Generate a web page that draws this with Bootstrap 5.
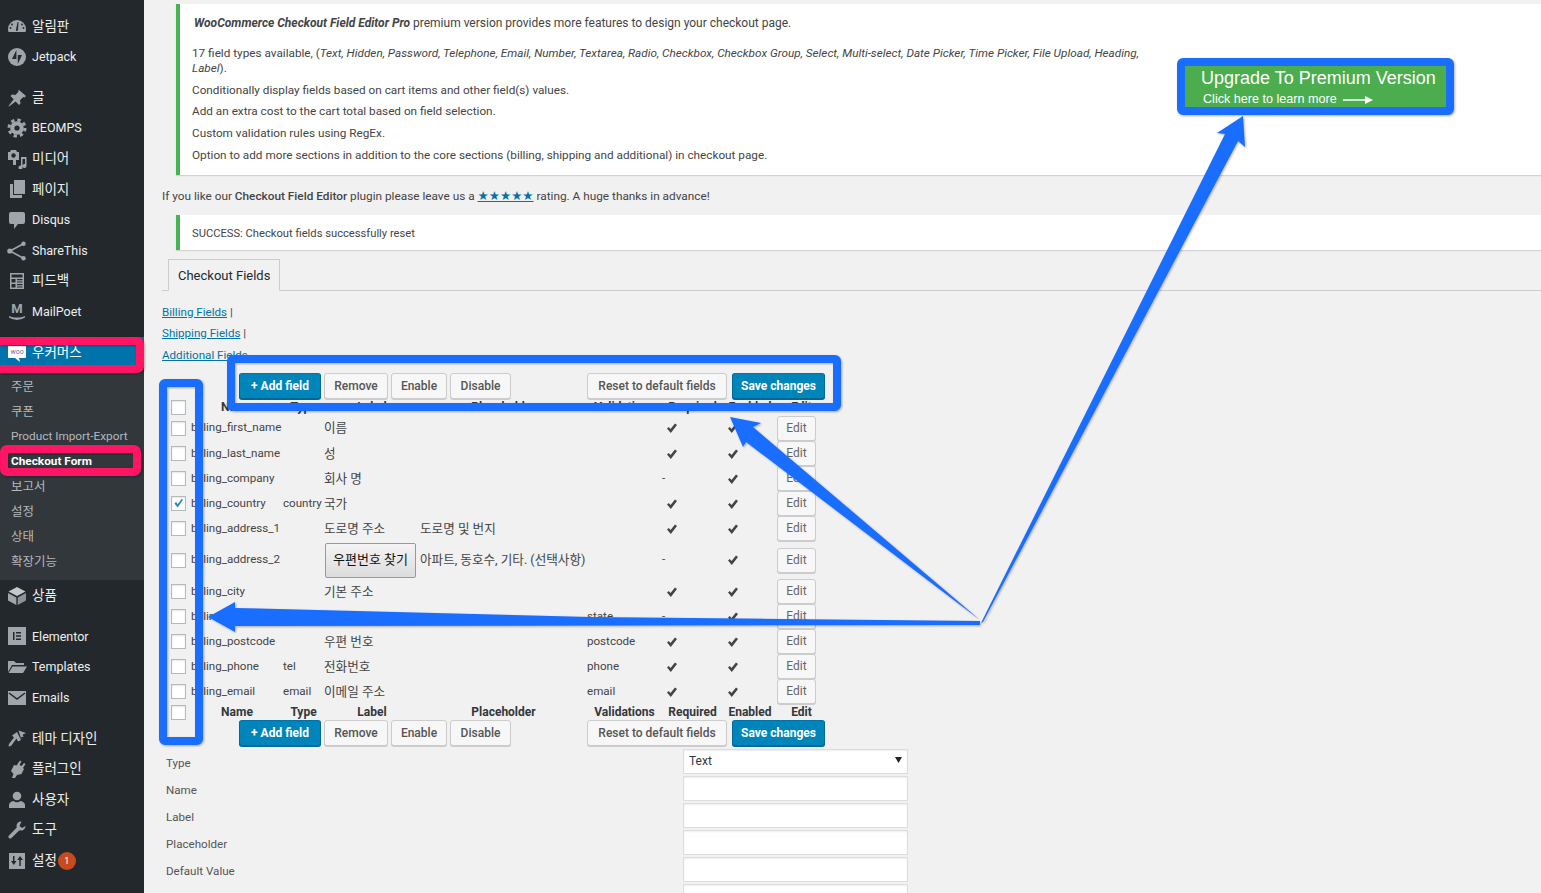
<!DOCTYPE html>
<html lang="ko">
<head>
    <meta charset="UTF-8">
    <meta name="viewport" content="width=device-width, initial-scale=1.0">
    <title>Checkout Form</title>
    <link href="https://cdn.jsdelivr.net/npm/bootstrap@5.3.0/dist/css/bootstrap.min.css" rel="stylesheet">
    <style>
        html, body { height: 893px; overflow: hidden; }
        body {
            background: #f1f1f1;
            color: #444;
            font: 11.6px/15.6px Roboto, "Noto Sans CJK KR", sans-serif;
            position: relative;
        }
        a { color: #0073aa; }
        .kr { font-size: 12.6px; }

        /* admin menu */
        .wp-side { width: 144px; flex: none; height: 893px; background: #23282d; padding-top: 11px; }
        .side-item { height: 30.6px; display: flex; align-items: center; color: #eee; font-size: 13.5px; white-space: nowrap; }
        .side-item svg { width: 20px; height: 20px; margin: 0 5px 0 7px; flex: none; fill: #a0a5aa; }
        .side-item.side-lat { font-size: 12.5px; }
        .side-gap { height: 10.2px; }
        .side-active { background: #0073aa; color: #fff; }
        .side-sub { background: #32373c; padding: 6.5px 0 6px; }
        .side-sub div { height: 25px; line-height: 25px; padding-left: 11px; color: #b4b9be; white-space: nowrap; font-size: 12.5px; }
        .side-sub .sub-lat { font-size: 11.8px; }
        .side-sub .sub-on { color: #fff; font-weight: 700; }
        .count-pill { width: 18px; height: 18px; border-radius: 50%; background: #ca4a1f; color: #fff; font-size: 9px; line-height: 18px; text-align: center; margin-left: 1px; }

        /* content */
        .wp-main { flex: 1; min-width: 0; padding: 4px 0 0 18px; }
        .wp-notice { margin-left: 14px; background: #fff; border-left: 4px solid #46b450; box-shadow: 0 1px 1px rgba(0,0,0,.12); padding-left: 12px; }
        .notice-big { height: 171px; padding-top: 12px; font-size: 11.75px; }
        .notice-big p { margin: 0 0 6px; width: 955px; }
        .notice-big .promo-head { margin: 0 0 14px 2px; font-size: 12px; }
        .notice-ok { height: 35px; line-height: 37px; font-size: 11.2px; }
        .thanks { margin: 14px 0 10px; color: #444; font-size: 11.8px; }
        .thanks b { font-weight: 500; }
        .stars { font-family: "DejaVu Sans", sans-serif; font-size: 12.5px; line-height: 0; }

        .nav-tabs.wp-tabs { margin-top: 9px; padding-left: 6px; border-bottom: 1px solid #ccc; }
        .wp-tabs .nav-link.active {
            background: #f1f1f1; border: 1px solid #ccc; border-bottom-color: #f1f1f1; border-radius: 0;
            color: #23282d; font-size: 13px; line-height: 18px; padding: 7px 9px 5px;
        }
        .section-links { margin-top: 11px; line-height: 21.5px; }

        .fields-table { table-layout: fixed; width: 660px; margin: 7px 0 0 4px; --bs-table-bg: transparent; --bs-table-color: #444; }
        .fields-table > :not(caption) > * > * { padding: 0; vertical-align: middle; border: 0; box-shadow: none; white-space: nowrap; }
        .c-cb { width: 25px; } .c-name { width: 92px; } .c-type { width: 41px; } .c-label { width: 96px; }
        .c-ph { width: 167px; } .c-val { width: 75px; } .c-req { width: 61px; } .c-on { width: 54px; } .c-edit { width: 49px; }
        .fields-table tbody tr { height: 25px; }
        .fields-table tbody .row-first { height: 26px; }
        .fields-table tbody .row-tall { height: 38px; }
        .fields-table .head-row { height: 16px; }
        .fields-table .foot-row { height: 16px; }
        .fields-table .head-row th, .fields-table .foot-row th { text-align: center; font-weight: 700; font-size: 12px; color: #32373c; line-height: 14px; }
        .fields-table .tool-row { height: 26px; }
        .tool-bar { display: flex; gap: 3px; padding: 0 0 0 73px; width: 660px; }
        .tool-bar .tb-add { width: 82px; }
        .tool-bar .tb-remove { width: 64px; }
        .tool-bar .tb-enable { width: 56px; }
        .tool-bar .tb-disable { width: 61px; }
        .tool-bar .tb-reset { width: 140px; margin-left: 73px; }
        .tool-bar .tb-save { width: 93px; margin-left: 2px; }

        .btn.wp-btn {
            --bs-btn-padding-y: 0; --bs-btn-padding-x: 0; --bs-btn-font-size: 12px; --bs-btn-border-radius: 3px;
            height: 26px; line-height: 24px; background: #f7f7f7; border: 1px solid #ccc; box-shadow: 0 1px 0 #ccc;
            color: #555; font-weight: 500; white-space: nowrap;
        }
        .btn.wp-btn-main { background: #0085ba; border-color: #0073aa #006799 #006799; box-shadow: 0 1px 0 #006799; color: #fff; font-weight: 700; }
        .btn.wp-edit { width: 39px; height: 25px; line-height: 23px; padding: 0; font-weight: 400; color: #666; display: block; }
        .btn.zip-btn {
            --bs-btn-padding-y: 0; --bs-btn-padding-x: 0; --bs-btn-border-radius: 2px;
            width: 91px; height: 35px; margin-left: 1px; font-size: 13px; color: #111;
            border: 1px solid #999; background: linear-gradient(#f4f4f4, #dcdcdc); white-space: nowrap;
        }
        .row-check.form-check-input { width: 15px; height: 15px; margin: 0 0 0 5px; border: 1px solid #b4b9be; border-radius: 0; box-shadow: inset 0 1px 2px rgba(0,0,0,.1); display: block; }
        .row-check.form-check-input:checked {
            background-color: #fff; border-color: #b4b9be;
            background-image: url("data:image/svg+xml,%3Csvg xmlns='http://www.w3.org/2000/svg' viewBox='0 0 16 16'%3E%3Cpath fill='%231e8cbe' d='M3 8l2-2 2 3 5-7 1.500 1.500L7 13z'/%3E%3C/svg%3E");
        }
        .tick { width: 10px; height: 10px; margin-left: 5px; fill: #444; display: block; }
        .dash { padding-left: 1px; }

        .extra-form { display: grid; grid-template-columns: 517px 225px; row-gap: 2px; margin: 3px 0 0 4px; }
        .extra-form label { height: 25px; line-height: 25px; padding-top: 2px; color: #555; }
        .extra-form .form-control, .extra-form .form-select {
            height: 25px; min-height: 0; padding: 0 5px; font-size: 12px; line-height: 23px; color: #32373c; border: 1px solid #ddd; border-radius: 0;
            box-shadow: inset 0 1px 2px rgba(0,0,0,.07);
        }
        .extra-form .form-select {
            background-size: 7px 6px; background-position: right 5px top 7px;
            background-image: url("data:image/svg+xml,%3Csvg xmlns='http://www.w3.org/2000/svg' viewBox='0 0 7 6'%3E%3Cpath fill='%23222' d='M0 0h7L3.500 6z'/%3E%3C/svg%3E");
        }

        /* annotations painted over the screenshot */
        .mark-layer { position: absolute; top: 0; left: 0; pointer-events: none; filter: drop-shadow(1px 1px 1px rgba(0,0,0,.3)); }
        .promo-banner {
            position: absolute; left: 1185px; top: 66px; width: 261px; height: 41px;
            background: #4cad4e; color: #fff; font-family: "Liberation Sans", sans-serif; padding: 2px 0 0 16px;
        }
        .promo-banner .promo-title { font-size: 18px; line-height: 20px; white-space: nowrap; }
        .promo-banner .promo-more { display: flex; align-items: center; gap: 6px; font-size: 12.6px; line-height: 15px; margin: 4px 0 0 2px; white-space: nowrap; }
        .promo-banner svg { width: 30px; height: 8px; fill: #fff; }
    </style>
</head>
<body>
    <svg width="0" height="0" class="position-absolute">
        <symbol id="i-dash" viewBox="0 0 20 20"><path d="M1 13a9 9 0 0 1 18 0c0 1-.2 2-.5 3h-17c-.3-1-.5-2-.5-3z"/><path fill="#23282d" d="M9 14l1.500-8 1 .2-.5 7.800a1 1 0 1 1-2 0z"/><circle fill="#23282d" cx="5" cy="8.500" r=".9"/><circle fill="#23282d" cx="3.500" cy="12" r=".9"/><circle fill="#23282d" cx="15" cy="8.500" r=".9"/><circle fill="#23282d" cx="16.500" cy="12" r=".9"/></symbol>
        <symbol id="i-jet" viewBox="0 0 20 20"><circle cx="10" cy="10" r="9"/><path fill="#23282d" d="M9.400 3v9H5zM10.800 17V8H15z"/></symbol>
        <symbol id="i-pin" viewBox="0 0 20 20"><path d="M12 2l7 6-1.500 1.500-1.300-.5-3.200 3.200.5 3.300-1.500 1.500-3.400-3.400L2 18.500l-.5-.5 5.200-6.800L3.500 8 5 6.500l3.400.4 3.100-3.100-.4-1z"/></symbol>
        <symbol id="i-gear" viewBox="0 0 20 20"><circle cx="10" cy="10" r="6.800"/><circle cx="10" cy="10" r="8" fill="none" stroke="#a0a5aa" stroke-width="3" stroke-dasharray="3.300 3"/><circle fill="#23282d" cx="10" cy="10" r="2.600"/></symbol>
        <symbol id="i-media" viewBox="0 0 20 20"><path d="M1 3h2l1-2h5l1 2h2v8H1z"/><circle fill="#23282d" cx="6.500" cy="6.500" r="2.200"/><path d="M14 8h5.500v9a2 2 0 1 1-1.500-1.900V10h-2.500v8.500a2 2 0 1 1-1.500-1.900z"/><path d="M6 11h3v5H6z"/></symbol>
        <symbol id="i-page" viewBox="0 0 20 20"><path d="M7 1h11v14H7z"/><path d="M3 5h3v11h9v3H3z"/></symbol>
        <symbol id="i-comment" viewBox="0 0 20 20"><path d="M4 2h12a2 2 0 0 1 2 2v8a2 2 0 0 1-2 2h-5l-4 5v-5H4a2 2 0 0 1-2-2V4a2 2 0 0 1 2-2z"/></symbol>
        <symbol id="i-share" viewBox="0 0 20 20"><path d="M16 3L3 10l13 7" fill="none" stroke="#a0a5aa" stroke-width="1.600"/><circle cx="16.500" cy="2.800" r="2.200"/><circle cx="2.800" cy="10" r="2.600"/><circle cx="16.500" cy="17.200" r="2.200"/></symbol>
        <symbol id="i-form" viewBox="0 0 20 20"><path fill-rule="evenodd" d="M3 2h14v16H3zM4.500 3.500v3h11v-3zM4.500 8v3.500h4V8zM10 8v1.200h5.500V8zM10 10.500v1h5.500v-1zM4.500 13v3.500h4V13zM10 13v1.200h5.500V13zM10 15.500v1h5.500v-1z"/></symbol>
        <symbol id="i-box" viewBox="0 0 20 20"><path d="M10 1l8.500 4.500L10 10 1.500 5.500z" fill="#c5c8cb"/><path d="M1 7l8.300 4.400V19L1 14.500z"/><path d="M19 7l-8.300 4.400V19l8.300-4.500z" fill="#8d9296"/></symbol>
        <symbol id="i-elem" viewBox="0 0 20 20"><path fill-rule="evenodd" d="M1 1h18v18H1zM6 6v8h1.500V6zM9 6v1.500h5V6zM9 9.200v1.500h5V9.200zM9 12.500V14h5v-1.500z"/></symbol>
        <symbol id="i-folder" viewBox="0 0 20 20"><path d="M1 4h6l2 2h8v2H5L1 15z"/><path d="M5.500 9.500H20L16 16H1.500z"/></symbol>
        <symbol id="i-mail" viewBox="0 0 20 20"><path d="M1 3h18v14H1z"/><path d="M2 5l8 6 8-6" fill="none" stroke="#23282d" stroke-width="1.500"/></symbol>
        <symbol id="i-brush" viewBox="0 0 20 20"><path d="M11.500 2.500L19 5l-3.500 1.800 1.200 1.900-2.500.3.300 2.500z"/><path d="M10 4l4 8-3 1.500-1.500-3L4 18l-2.500.5L2 16l5-6.500-2-2z"/></symbol>
        <symbol id="i-plug" viewBox="0 0 20 20"><path d="M13 1.500l1.500 1L12.500 6l2 1 2.500-3 1.500 1L16 9l1 1-2.500 5-4.500 1-2 3H5l1.500-4L4 12l3-6 2.500.500z"/></symbol>
        <symbol id="i-user" viewBox="0 0 20 20"><circle cx="10" cy="6" r="4.300"/><path d="M2 18v-3c0-2 2-3.500 4.500-4 1 1 2.200 1.300 3.500 1.300s2.500-.3 3.500-1.300c2.500.5 4.500 2 4.500 4v3z"/></symbol>
        <symbol id="i-wrench" viewBox="0 0 20 20"><path d="M14 1.500c-2.500 0-4.500 2-4.500 4.500 0 .6.100 1.100.3 1.600L2 15.500c-.8.800-.8 1.700 0 2.500s1.700.8 2.500 0l7.900-7.800c.5.200 1 .3 1.600.3 2.500 0 4.500-2 4.500-4.500l-3.500 2-2.500-2 2-4.500z"/></symbol>
        <symbol id="i-set" viewBox="0 0 20 20"><path fill-rule="evenodd" d="M2 2h16v16H2zM6 5v5H4l2.800 4 2.700-4h-2V5zM13 5l-2.700 4h2v6h1.500V9H16z"/></symbol>
        <symbol id="i-tick" viewBox="0 0 10 10"><path d="M0 5.500l1.800-1.600L3.500 6 8 .5 10 2 3.800 10z"/></symbol>
    </svg>

    <div class="d-flex">
        <div class="wp-side">
            <div class="side-item"><svg><use href="#i-dash"/></svg>알림판</div>
            <div class="side-item side-lat"><svg><use href="#i-jet"/></svg>Jetpack</div>
            <div class="side-gap"></div>
            <div class="side-item"><svg><use href="#i-pin"/></svg>글</div>
            <div class="side-item side-lat"><svg><use href="#i-gear"/></svg>BEOMPS</div>
            <div class="side-item"><svg><use href="#i-media"/></svg>미디어</div>
            <div class="side-item"><svg><use href="#i-page"/></svg>페이지</div>
            <div class="side-item side-lat"><svg><use href="#i-comment"/></svg>Disqus</div>
            <div class="side-item side-lat"><svg><use href="#i-share"/></svg>ShareThis</div>
            <div class="side-item"><svg><use href="#i-form"/></svg>피드백</div>
            <div class="side-item side-lat"><svg viewBox="0 0 20 20"><text x="10" y="11" text-anchor="middle" font-family="Roboto" font-size="13" font-weight="700">M</text><path d="M2 14c5 2 11 2 16 0v1.500c-3 1.500-5 2-8 2.500-3-.5-5-1-8-2.500z"/></svg>MailPoet</div>
            <div class="side-gap"></div>
            <div class="side-item side-active"><svg viewBox="0 0 20 20"><path fill="#fff" d="M2 3h16a1 1 0 0 1 1 1v10a1 1 0 0 1-1 1h-6l1 4-5-4H2a1 1 0 0 1-1-1V4a1 1 0 0 1 1-1z"/><text x="10" y="11" text-anchor="middle" font-family="Roboto" font-size="7" fill="#7b6aa6">woo</text></svg>우커머스</div>
            <div class="side-sub">
                <div>주문</div>
                <div>쿠폰</div>
                <div class="sub-lat">Product Import-Export</div>
                <div class="sub-lat sub-on">Checkout Form</div>
                <div>보고서</div>
                <div>설정</div>
                <div>상태</div>
                <div>확장기능</div>
            </div>
            <div class="side-item"><svg><use href="#i-box"/></svg>상품</div>
            <div class="side-gap"></div>
            <div class="side-item side-lat"><svg><use href="#i-elem"/></svg>Elementor</div>
            <div class="side-item side-lat"><svg><use href="#i-folder"/></svg>Templates</div>
            <div class="side-item side-lat"><svg><use href="#i-mail"/></svg>Emails</div>
            <div class="side-gap"></div>
            <div class="side-item"><svg><use href="#i-brush"/></svg>테마 디자인</div>
            <div class="side-item"><svg><use href="#i-plug"/></svg>플러그인</div>
            <div class="side-item"><svg><use href="#i-user"/></svg>사용자</div>
            <div class="side-item"><svg><use href="#i-wrench"/></svg>도구</div>
            <div class="side-item"><svg><use href="#i-set"/></svg>설정<span class="count-pill">1</span></div>
        </div>

        <div class="wp-main">
            <div class="wp-notice notice-big">
                <p class="promo-head"><b><i>WooCommerce Checkout Field Editor Pro</i></b> premium version provides more features to design your checkout page.</p>
                <p>17 field types available, (<i>Text, Hidden, Password, Telephone, Email, Number, Textarea, Radio, Checkbox, Checkbox Group, Select, Multi-select, Date Picker, Time Picker, File Upload, Heading, Label</i>).</p>
                <p>Conditionally display fields based on cart items and other field(s) values.</p>
                <p>Add an extra cost to the cart total based on field selection.</p>
                <p>Custom validation rules using RegEx.</p>
                <p>Option to add more sections in addition to the core sections (billing, shipping and additional) in checkout page.</p>
            </div>
            <p class="thanks">If you like our <b>Checkout Field Editor</b> plugin please leave us a <a href="#" class="stars">★★★★★</a> rating. A huge thanks in advance!</p>
            <div class="wp-notice notice-ok">SUCCESS: Checkout fields successfully reset</div>

            <ul class="nav nav-tabs wp-tabs">
                <li class="nav-item"><a class="nav-link active" href="#">Checkout Fields</a></li>
            </ul>

            <div class="section-links">
                <div><a href="#">Billing Fields</a> |</div>
                <div><a href="#">Shipping Fields</a> |</div>
                <div><a href="#">Additional Fields</a></div>
            </div>

            <table class="table fields-table">
                <colgroup>
                    <col class="c-cb"><col class="c-name"><col class="c-type"><col class="c-label"><col class="c-ph"><col class="c-val"><col class="c-req"><col class="c-on"><col class="c-edit">
                </colgroup>
                <thead>
                    <tr class="tool-row"><td colspan="9">
                        <div class="tool-bar">
                            <button class="btn wp-btn wp-btn-main tb-add">+ Add field</button>
                            <button class="btn wp-btn tb-remove">Remove</button>
                            <button class="btn wp-btn tb-enable">Enable</button>
                            <button class="btn wp-btn tb-disable">Disable</button>
                            <button class="btn wp-btn tb-reset">Reset to default fields</button>
                            <button class="btn wp-btn wp-btn-main tb-save">Save changes</button>
                        </div>
                    </td></tr>
                    <tr class="head-row">
                        <th><input type="checkbox" class="form-check-input row-check"></th>
                        <th>Name</th><th>Type</th><th>Label</th><th>Placeholder</th><th>Validations</th><th>Required</th><th>Enabled</th><th>Edit</th>
                    </tr>
                </thead>
                <tbody>
                    <tr class="row-first"><td><input type="checkbox" class="form-check-input row-check"></td><td>billing_first_name</td><td></td><td class="kr">이름</td><td></td><td></td><td><svg class="tick"><use href="#i-tick"/></svg></td><td><svg class="tick"><use href="#i-tick"/></svg></td><td><button class="btn wp-btn wp-edit">Edit</button></td></tr>
                    <tr><td><input type="checkbox" class="form-check-input row-check"></td><td>billing_last_name</td><td></td><td class="kr">성</td><td></td><td></td><td><svg class="tick"><use href="#i-tick"/></svg></td><td><svg class="tick"><use href="#i-tick"/></svg></td><td><button class="btn wp-btn wp-edit">Edit</button></td></tr>
                    <tr><td><input type="checkbox" class="form-check-input row-check"></td><td>billing_company</td><td></td><td class="kr">회사 명</td><td></td><td></td><td class="dash">-</td><td><svg class="tick"><use href="#i-tick"/></svg></td><td><button class="btn wp-btn wp-edit">Edit</button></td></tr>
                    <tr><td><input type="checkbox" class="form-check-input row-check" checked></td><td>billing_country</td><td>country</td><td class="kr">국가</td><td></td><td></td><td><svg class="tick"><use href="#i-tick"/></svg></td><td><svg class="tick"><use href="#i-tick"/></svg></td><td><button class="btn wp-btn wp-edit">Edit</button></td></tr>
                    <tr><td><input type="checkbox" class="form-check-input row-check"></td><td>billing_address_1</td><td></td><td class="kr">도로명 주소</td><td class="kr">도로명 및 번지</td><td></td><td><svg class="tick"><use href="#i-tick"/></svg></td><td><svg class="tick"><use href="#i-tick"/></svg></td><td><button class="btn wp-btn wp-edit">Edit</button></td></tr>
                    <tr class="row-tall"><td><input type="checkbox" class="form-check-input row-check"></td><td>billing_address_2</td><td></td><td><button class="btn zip-btn">우편번호 찾기</button></td><td class="kr">아파트, 동호수, 기타. (선택사항)</td><td></td><td class="dash">-</td><td><svg class="tick"><use href="#i-tick"/></svg></td><td><button class="btn wp-btn wp-edit">Edit</button></td></tr>
                    <tr><td><input type="checkbox" class="form-check-input row-check"></td><td>billing_city</td><td></td><td class="kr">기본 주소</td><td></td><td></td><td><svg class="tick"><use href="#i-tick"/></svg></td><td><svg class="tick"><use href="#i-tick"/></svg></td><td><button class="btn wp-btn wp-edit">Edit</button></td></tr>
                    <tr><td><input type="checkbox" class="form-check-input row-check"></td><td>billing_state</td><td></td><td></td><td></td><td>state</td><td class="dash">-</td><td><svg class="tick"><use href="#i-tick"/></svg></td><td><button class="btn wp-btn wp-edit">Edit</button></td></tr>
                    <tr><td><input type="checkbox" class="form-check-input row-check"></td><td>billing_postcode</td><td></td><td class="kr">우편 번호</td><td></td><td>postcode</td><td><svg class="tick"><use href="#i-tick"/></svg></td><td><svg class="tick"><use href="#i-tick"/></svg></td><td><button class="btn wp-btn wp-edit">Edit</button></td></tr>
                    <tr><td><input type="checkbox" class="form-check-input row-check"></td><td>billing_phone</td><td>tel</td><td class="kr">전화번호</td><td></td><td>phone</td><td><svg class="tick"><use href="#i-tick"/></svg></td><td><svg class="tick"><use href="#i-tick"/></svg></td><td><button class="btn wp-btn wp-edit">Edit</button></td></tr>
                    <tr><td><input type="checkbox" class="form-check-input row-check"></td><td>billing_email</td><td>email</td><td class="kr">이메일 주소</td><td></td><td>email</td><td><svg class="tick"><use href="#i-tick"/></svg></td><td><svg class="tick"><use href="#i-tick"/></svg></td><td><button class="btn wp-btn wp-edit">Edit</button></td></tr>
                </tbody>
                <tfoot>
                    <tr class="foot-row">
                        <th><input type="checkbox" class="form-check-input row-check"></th>
                        <th>Name</th><th>Type</th><th>Label</th><th>Placeholder</th><th>Validations</th><th>Required</th><th>Enabled</th><th>Edit</th>
                    </tr>
                    <tr class="tool-row"><td colspan="9">
                        <div class="tool-bar">
                            <button class="btn wp-btn wp-btn-main tb-add">+ Add field</button>
                            <button class="btn wp-btn tb-remove">Remove</button>
                            <button class="btn wp-btn tb-enable">Enable</button>
                            <button class="btn wp-btn tb-disable">Disable</button>
                            <button class="btn wp-btn tb-reset">Reset to default fields</button>
                            <button class="btn wp-btn wp-btn-main tb-save">Save changes</button>
                        </div>
                    </td></tr>
                </tfoot>
            </table>

            <div class="extra-form">
                <label>Type</label><select class="form-select"><option>Text</option></select>
                <label>Name</label><input type="text" class="form-control">
                <label>Label</label><input type="text" class="form-control">
                <label>Placeholder</label><input type="text" class="form-control">
                <label>Default Value</label><input type="text" class="form-control">
                <label></label><input type="text" class="form-control">
            </div>
        </div>
    </div>

    <!-- hand drawn marks on top of the page -->
    <svg class="mark-layer" width="1541" height="893">
        <rect x="-10" y="341" width="150" height="28" rx="3" fill="none" stroke="#ff1563" stroke-width="8"/>
        <rect x="4" y="449" width="133" height="23" rx="3" fill="none" stroke="#ff1563" stroke-width="8"/>
        <rect x="231" y="359" width="606" height="48" rx="2" fill="none" stroke="#1a6eff" stroke-width="8"/>
        <rect x="163" y="383" width="36" height="358" rx="2" fill="none" stroke="#1a6eff" stroke-width="8"/>
        <rect x="1181" y="62" width="269" height="49" rx="2" fill="none" stroke="#1a6eff" stroke-width="8"/>
        <polygon fill="#1a6eff" points="981,623 983,622 1238,141 1245,147 1243,116 1217,133 1225,134"/>
        <polygon fill="#1a6eff" points="980,620 753,427 761,423 730,417 743,447 746,442"/>
        <polygon fill="#1a6eff" points="980,621 980,625 235,626 235,632 208,617 235,602 235,608 590,617"/>
    </svg>
    <div class="promo-banner">
        <div class="promo-title">Upgrade To Premium Version</div>
        <div class="promo-more">Click here to learn more <svg viewBox="0 0 30 8"><path d="M0 3.300h22V0l8 4-8 4V4.700H0z"/></svg></div>
    </div>

    <script src="https://cdn.jsdelivr.net/npm/bootstrap@5.3.0/dist/js/bootstrap.bundle.min.js"></script>
</body>
</html>
